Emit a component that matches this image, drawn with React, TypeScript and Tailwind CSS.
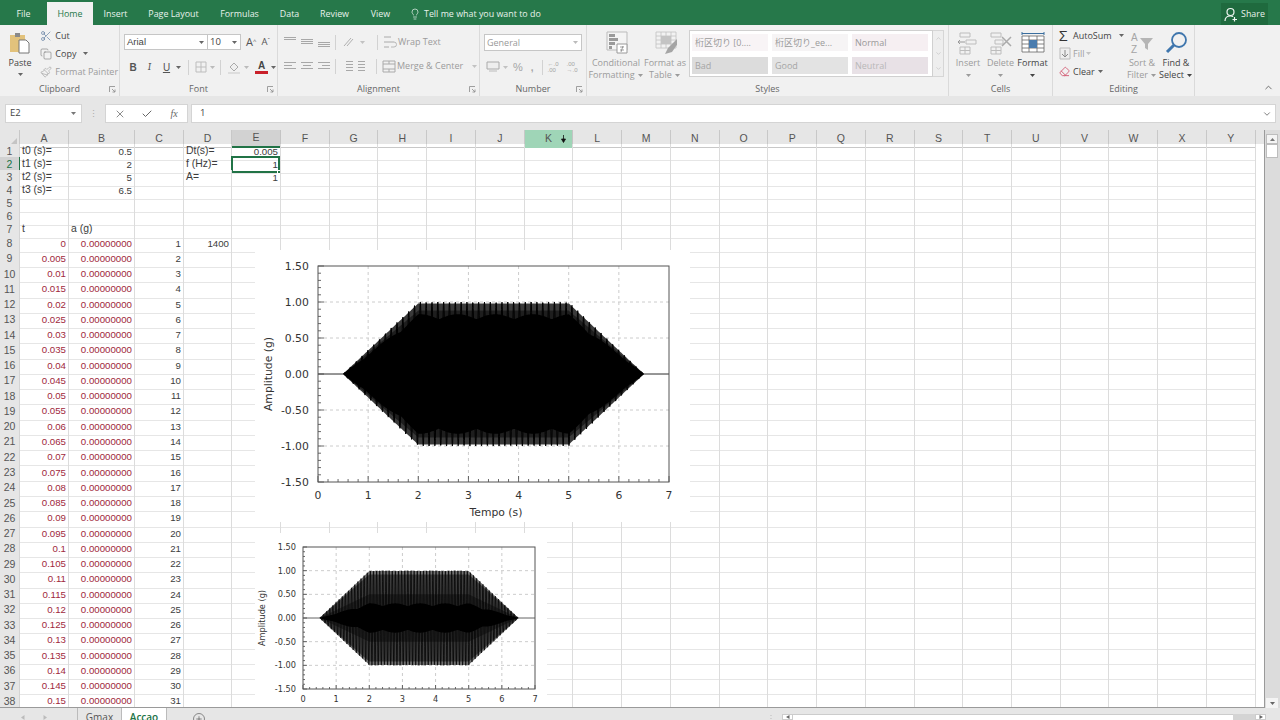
import React from "react";
import { Scissors, Copy, Paintbrush, Lightbulb, ChevronDown, ChevronUp, X, Check, Plus, Eraser } from "lucide-react";

const Caret = ({ className = "" }: { className?: string }) => (
  <svg width="7" height="5" viewBox="0 0 7 5" className={`shrink-0 ${className}`}><path d="M1 1h5L3.5 4z" fill="currentColor" /></svg>
);

const Launcher = () => (
  <svg width="7" height="7" viewBox="0 0 7 7" className="text-[#8a8a8a] shrink-0"><path d="M.5 6V.5H6M3 3l3 3M6 3.5V6H3.5" fill="none" stroke="currentColor" strokeWidth=".8" /></svg>
);

const Lines = ({ rows, w = 14, h = 12, color = "#a8a8a8" }: { rows: [number, number, number][]; w?: number; h?: number; color?: string }) => (
  <svg width={w} height={h} viewBox={`0 0 ${w} ${h}`} className="shrink-0">
    {rows.map(([y, a, b], i) => <path key={i} d={`M${a} ${y + 0.5}H${b}`} stroke={color} />)}
  </svg>
);

const Group = ({ w, label, launcher, children }: { w: string; label: string; launcher?: boolean; children: React.ReactNode }) => (
  <div className={`${w} shrink-0 h-full flex flex-col border-r border-[#dadada]`}>
    <div className="flex-1 min-h-0 flex">{children}</div>
    <div className="h-[14px] flex items-center justify-center relative text-[#666] text-[9px]">
      {label}
      {launcher && <span className="absolute right-[3px] top-[4px] flex"><Launcher /></span>}
    </div>
  </div>
);

const Sep = () => <div className="w-px h-[15px] bg-[#d2d2d2] shrink-0" />;

const Big = ({ w, icon, l1, l2, dim = true, caret = true }: { w: string; icon: React.ReactNode; l1: string; l2?: string; dim?: boolean; caret?: boolean }) => (
  <div className={`${w} shrink-0 flex flex-col items-center pt-[5px] ${dim ? "text-[#9b9b9b]" : "text-[#444]"} text-[9px] leading-[12px]`}>
    <div className="h-[26px] flex items-center justify-center">{icon}</div>
    <div className="mt-[1px] whitespace-nowrap">{l1}</div>
    <div className="whitespace-nowrap flex items-center gap-[2px] h-[12px]">{l2}{caret && <Caret />}</div>
  </div>
);

const TableIcon = ({ children }: { children?: React.ReactNode }) => (
  <svg width="24" height="24" viewBox="0 0 24 24" className="shrink-0">
    {children}
  </svg>
);

const tabs: [string, string][] = [
  ["File", "w-[47px]"], ["Home", "w-[46px]"], ["Insert", "w-[45px]"], ["Page Layout", "w-[71px]"], ["Formulas", "w-[61px]"], ["Data", "w-[39px]"], ["Review", "w-[51px]"], ["View", "w-[41px]"],
];

function TopBar() {
  return (
    <div className="h-[25px] bg-[#26784a] flex items-end text-[#e8f2ec] text-[8.9px] shrink-0">
      {tabs.map(([t, w]) => (
        <div key={t} className={`${w} h-[23px] flex items-center justify-center ${t === "Home" ? "bg-[#f1f1f1] text-[#26784a]" : ""}`}>{t}</div>
      ))}
      <div className="flex items-center h-[23px] ml-[8px] gap-[3px]">
        <Lightbulb size={12} strokeWidth={1.4} />
        <span>Tell me what you want to do</span>
      </div>
      <div className="ml-auto mr-[12px] h-[22px] w-[47px] bg-[#1f6a3e] flex items-center justify-center gap-[3px]">
        <svg width="14" height="15" viewBox="0 0 14 15" fill="none" stroke="#f0f6f2" strokeWidth="1.2"><circle cx="6.500" cy="5" r="3.500" /><path d="M1 14c0-3 2-5 5.500-5 1 0 2 .2 2.700.6M10.500 10v4.500M8.500 12.500h4.500" /></svg>
        <span>Share</span>
      </div>
    </div>
  );
}

function Clipboard() {
  return (
    <Group w="w-[120px]" label="Clipboard" launcher>
      <div className="w-[40px] flex flex-col items-center pt-[6px] text-[#444] text-[9px]">
        <svg width="24" height="24" viewBox="0 0 24 24"><path d="M2 4h15v17H2z" fill="#e2c27c" /><path d="M7 2h5v4H7z" fill="#8a8a8a" /><path d="M11 9h7l3 3v10H11z" fill="#fff" stroke="#777" /></svg>
        <div className="mt-[2px] leading-[12px]">Paste</div>
        <Caret className="mt-[3px] text-[#666]" />
      </div>
      <div className="flex flex-col text-[9px] pt-[4px] gap-[5px] whitespace-nowrap">
        <div className="flex items-center gap-[1px] h-[13px] text-[#444]"><Scissors size={12} strokeWidth={1.2} className="text-[#4b6d96]" />&nbsp;Cut</div>
        <div className="flex items-center gap-[1px] h-[13px] text-[#444]"><Copy size={12} strokeWidth={1.2} className="text-[#777]" />&nbsp;Copy<Caret className="ml-[5px] text-[#666]" /></div>
        <div className="flex items-center gap-[1px] h-[13px] text-[#9b9b9b]"><Paintbrush size={12} strokeWidth={1.2} />&nbsp;Format Painter</div>
      </div>
    </Group>
  );
}

function FontGroup() {
  return (
    <Group w="w-[158px]" label="Font" launcher>
      <div className="flex flex-col pl-[4px] pt-[9px] w-full">
        <div className="flex items-center h-[16px] text-[#444]">
          <div className="w-[84px] h-full bg-white border border-[#c6c6c6] flex items-center justify-between px-[2px] font-['Liberation_Sans',sans-serif] text-[9.5px]">Arial<Caret className="text-[#666]" /></div>
          <div className="w-[33px] h-full bg-white border border-l-0 border-[#c6c6c6] flex items-center justify-between px-[2px] text-[9.5px]">10<Caret className="text-[#666]" /></div>
          <span className="ml-[5px] text-[11px] text-[#555]">A<sup className="text-[6px]">^</sup></span>
          <span className="ml-[5px] text-[9.5px] text-[#555]">A<sup className="text-[6px]">ˇ</sup></span>
        </div>
        <div className="flex items-center h-[16px] mt-[9px] text-[#555] font-['Liberation_Sans',sans-serif] text-[10px]">
          <b className="w-[16px] text-center ml-[1px]">B</b>
          <i className="w-[17px] text-center font-serif">I</i>
          <u className="w-[17px] text-center">U</u>
          <Caret className="text-[#666]" />
          <div className="ml-[6px]"><Sep /></div>
          <svg width="12" height="12" viewBox="0 0 12 12" className="ml-[6px]"><path d="M1 1h10v10H1zM6 1v10M1 6h10" fill="none" stroke="#bdbdbd" /></svg>
          <Caret className="ml-[2px] text-[#bbb]" />
          <div className="ml-[4px]"><Sep /></div>
          <svg width="14" height="13" viewBox="0 0 14 13" className="ml-[6px]"><path d="M3 6l4-4 4 4-4 4z" fill="#efefef" stroke="#aaa" /><path d="M1 12h12" stroke="#ddd" strokeWidth="2" /></svg>
          <Caret className="ml-[2px] text-[#bbb]" />
          <div className="ml-[5px] w-[13px] flex flex-col items-center leading-[10px] font-bold text-[#444]">A<div className="w-[13px] h-[3px] bg-[#c9202a]" /></div>
          <Caret className="ml-[2px] text-[#666]" />
        </div>
      </div>
    </Group>
  );
}

function Alignment() {
  const top: [number, number, number][] = [[1, 0, 12], [3, 0, 12]];
  const mid: [number, number, number][] = [[3, 0, 12], [5, 0, 12], [7, 0, 12]];
  const bot: [number, number, number][] = [[6, 0, 12], [8, 0, 12], [10, 0, 12]];
  const l: [number, number, number][] = [[2, 0, 12], [5, 0, 8], [8, 0, 12]];
  const c: [number, number, number][] = [[2, 0, 12], [5, 2, 10], [8, 0, 12]];
  const r: [number, number, number][] = [[2, 0, 12], [5, 4, 12], [8, 0, 12]];
  return (
    <Group w="w-[202px]" label="Alignment" launcher>
      <div className="flex flex-col pl-[6px] pt-[8px]">
        <div className="flex items-center h-[18px] gap-[5px]">
          <Lines rows={top} w={12} /><Lines rows={mid} w={12} /><Lines rows={bot} w={12} />
          <Sep />
          <svg width="14" height="12" viewBox="0 0 14 12" className="ml-[1px]"><path d="M2 10L9 2M5 10l6-7" stroke="#b0b0b0" fill="none" /></svg>
          <Caret className="text-[#c2c2c2] -ml-[2px]" />
          <div className="ml-[6px]"><Sep /></div>
          <svg width="14" height="13" viewBox="0 0 14 13"><path d="M1 1h7M1 6h10M1 11h5" stroke="#aaa" fill="none" /><path d="M11 6a2 2 0 010 5H8" stroke="#b8b8b8" fill="none" /></svg>
          <span className="text-[#9b9b9b] text-[9px] -ml-[4px]">Wrap Text</span>
        </div>
        <div className="flex items-center h-[18px] gap-[5px] mt-[6px]">
          <Lines rows={l} w={12} /><Lines rows={c} w={12} /><Lines rows={r} w={12} />
          <Sep />
          <Lines rows={[[1, 5, 12], [4, 5, 12], [7, 5, 12], [10, 5, 12]]} w={12} />
          <Lines rows={[[1, 0, 7], [4, 0, 7], [7, 0, 7], [10, 0, 7]]} w={12} />
          <div className="ml-[1px]"><Sep /></div>
          <svg width="14" height="13" viewBox="0 0 14 13"><path d="M1 1h12v11H1zM1 4h12M1 9h12M7 1v3M7 9v3" stroke="#aaa" fill="none" /></svg>
          <span className="text-[#9b9b9b] text-[9px] -ml-[4px] whitespace-nowrap">Merge &amp; Center</span>
          <Caret className="text-[#c2c2c2] ml-[3px]" />
        </div>
      </div>
    </Group>
  );
}

function NumberGroup() {
  return (
    <Group w="w-[107px]" label="Number" launcher>
      <div className="flex flex-col pl-[4px] pt-[9px]">
        <div className="w-[98px] h-[17px] bg-white border border-[#c6c6c6] flex items-center justify-between px-[2px] text-[#999] text-[9px]">General<Caret className="text-[#bbb]" /></div>
        <div className="flex items-center h-[16px] mt-[8px] text-[#a5a5a5] font-['Liberation_Sans',sans-serif]">
          <svg width="14" height="12" viewBox="0 0 14 12" className="ml-[2px]"><path d="M1 1h12v7H1z" fill="#eee" stroke="#aaa" /><path d="M3 10h8" stroke="#bbb" /></svg>
          <Caret className="ml-[2px] text-[#c2c2c2]" />
          <span className="ml-[4px] text-[11px]">%</span>
          <b className="ml-[8px] text-[10px] font-bold">,</b>
          <div className="ml-[8px]"><Sep /></div>
          <span className="ml-[5px] text-[6px] leading-[6px] w-[12px]">←.0<br />.00</span>
          <span className="ml-[7px] text-[6px] leading-[6px] w-[12px]">.00<br />→.0</span>
        </div>
      </div>
    </Group>
  );
}

const StyleCell = ({ t, className }: { t: string; className: string }) => (
  <div className={`w-[76px] h-[17px] flex items-center px-[3px] text-[9px] whitespace-nowrap overflow-hidden ${className}`}>{t}</div>
);

function Styles() {
  return (
    <Group w="w-[362px]" label="Styles">
      <Big w="w-[50px] ml-[4px]" l1="Conditional" l2="Formatting"
        icon={<TableIcon><path d="M3 1h20v18H3z" fill="#f4f4f4" stroke="#bbb" /><path d="M5 3h6v3H5zM5 7h9v3H5zM5 11h6v3H5zM5 15h3v3H5z" fill="#9a9a9a" /><path d="M13 13h10v9H13z" fill="#fff" stroke="#999" /><path d="M16 16h4M16 19h4M19 15l-2 6" stroke="#888" fill="none" strokeWidth=".8" /></TableIcon>} />
      <Big w="w-[48px]" l1="Format as" l2="Table"
        icon={<TableIcon><path d="M3 1h20v16H3zM3 5h20M3 9h20M3 13h20M8 1v16M13 1v16M18 1v16" fill="#f2f2f2" stroke="#c2c2c2" strokeWidth=".8" /><path d="M8 5h10v8H8z" fill="#c4c4c4" /><path d="M24 8l-9 9-3 6 7-2 7-10z" fill="#a5a5a5" /></TableIcon>} />
      <div className="flex items-start mt-[5px]">
        <div className="w-[244px] h-[47px] bg-white border border-[#d0d0d0] grid grid-cols-[76px_76px_76px] gap-x-[4px] gap-y-[4px] pl-[2px] pt-[3px] font-['Open_Sans','Noto_Sans_CJK_JP',sans-serif]">
          <StyleCell t="桁区切り [0...." className="bg-[#f8f4f6] text-[#9a9a9a]" />
          <StyleCell t="桁区切り_ee..." className="bg-[#f6f4f5] text-[#9a9a9a]" />
          <StyleCell t="Normal" className="bg-[#f6eff2] text-[#999]" />
          <StyleCell t="Bad" className="bg-[#dcdcdc] text-[#a5a5a5]" />
          <StyleCell t="Good" className="bg-[#e3e3e3] text-[#a5a5a5]" />
          <StyleCell t="Neutral" className="bg-[#e8e1e6] text-[#b8b8b8]" />
        </div>
        <div className="w-[11px] h-[47px] border border-l-0 border-[#d6d6d6] bg-[#eeeeee] flex flex-col items-center justify-around text-[#bbb]">
          <ChevronUp size={7} /><ChevronDown size={7} /><ChevronDown size={7} />
        </div>
      </div>
    </Group>
  );
}

function Cells() {
  return (
    <Group w="w-[104px]" label="Cells">
      <Big w="w-[32px] ml-[3px]" l1="Insert" l2=""
        icon={<TableIcon><path d="M4 2h10v4H4zM4 16h10v7H4zM4 19.500h10M9 16v7M10 9h10v4H10z" fill="none" stroke="#bdbdbd" /><path d="M9 11H2M4 9l-2 2 2 2" fill="none" stroke="#999" /></TableIcon>} />
      <Big w="w-[33px]" l1="Delete" l2=""
        icon={<TableIcon><path d="M2 2h10v4H2zM2 16h10v7H2zM2 19.500h10M7 16v7M6 9h8v4H6z" fill="none" stroke="#bdbdbd" /><path d="M13 6l9 9M22 6l-9 9" stroke="#aaa" strokeWidth="1.500" /></TableIcon>} />
      <Big w="w-[31px]" dim={false} l1="Format" l2=""
        icon={<TableIcon><path d="M1 5h22v16H1zM1 9h22M1 13h22M1 17h22M8 5v16M16 5v16" fill="#fff" stroke="#666" strokeWidth=".8" /><path d="M8 9h8v8H8z" fill="#4a7cae" /><path d="M1 2.500h22M1 1v3M23 1v3" stroke="#3a6e9e" fill="none" /></TableIcon>} />
    </Group>
  );
}

function Editing() {
  return (
    <Group w="w-[142px]" label="Editing">
      <div className="w-[72px] shrink-0 flex flex-col pt-[4px] pl-[6px] gap-[5px] text-[9px]">
        <div className="flex items-center h-[13px] text-[#444]"><span className="w-[14px] shrink-0 text-[15px] leading-none text-[#333]">Σ</span>AutoSum<Caret className="ml-[6px] text-[#666]" /></div>
        <div className="flex items-center h-[13px] text-[#a0a0a0]"><span className="w-[14px] shrink-0 flex"><svg width="12" height="13" viewBox="0 0 12 13"><path d="M1 1h10v11H1z" fill="#eee" stroke="#bbb" /><path d="M6 3v7M3 7l3 3 3-3" fill="none" stroke="#8a8a8a" /></svg></span>Fill<Caret className="ml-[1px] text-[#c2c2c2]" /></div>
        <div className="flex items-center h-[13px] text-[#444]"><span className="w-[14px] shrink-0 flex"><Eraser size={11} className="text-[#d25a72]" strokeWidth={2} /></span>Clear<Caret className="ml-[2px] text-[#666]" /></div>
      </div>
      <Big w="w-[34px]" l1="Sort &" l2="Filter"
        icon={<TableIcon><text x="1" y="10" fontSize="10" fill="#a5a5a5" fontFamily="Liberation Sans">A</text><text x="1" y="22" fontSize="10" fill="#a5a5a5" fontFamily="Liberation Sans">Z</text><path d="M10 7h13l-5 6v6l-3-2v-4z" fill="#b5b5b5" /></TableIcon>} />
      <Big w="w-[34px]" dim={false} l1="Find &" l2="Select"
        icon={<TableIcon><circle cx="15" cy="9" r="7" fill="none" stroke="#3f76ad" strokeWidth="1.800" /><path d="M10 14l-7 7" stroke="#3f76ad" strokeWidth="3" /></TableIcon>} />
    </Group>
  );
}

function Ribbon() {
  return (
    <div className="h-[71px] bg-[#f1f1f1] flex shrink-0 pr-[6px]">
      <Clipboard /><FontGroup /><Alignment /><NumberGroup /><Styles /><Cells /><Editing />
      <div className="flex-1 flex items-end justify-end pb-[3px] text-[#666]"><ChevronUp size={11} /></div>
    </div>
  );
}

function FormulaBar() {
  return (
    <div className="h-[34px] bg-[#e6e6e6] flex items-start pt-[8px] pl-[5px] shrink-0 text-[#444] font-['Open_Sans',sans-serif] text-[9.5px]">
      <div className="w-[77px] h-[19px] bg-white border border-[#d4d4d4] flex items-center justify-between px-[4px]">E2<Caret className="text-[#777]" /></div>
      <div className="w-[23px] h-[19px] flex items-center justify-center text-[#aaa] text-[9px]">⋮</div>
      <div className="w-[83px] h-[19px] bg-white border border-[#d4d4d4] flex items-center text-[#666]">
        <div className="w-[28px] flex justify-center"><X size={12} strokeWidth={1.5} /></div>
        <div className="w-[28px] flex justify-center"><Check size={12} strokeWidth={2} /></div>
        <div className="w-[26px] flex justify-center font-['Liberation_Serif',serif] italic text-[10px]">fx</div>
      </div>
      <div className="ml-[3px] w-[1085px] h-[19px] bg-white border border-[#d4d4d4] flex items-center justify-between pl-[8px] pr-[3px]">1<ChevronDown size={10} className="text-[#666]" /></div>
    </div>
  );
}

const gridCols = "grid grid-cols-[20px_49px_66px_49px_48px_49px_repeat(20,48.74px)]";
const colNames = "ABCDEFGHIJKLMNOPQRSTUVWXY".split("");

type Cell = { t: string; right?: boolean; red?: boolean };
const top: Record<number, Cell[]> = {
  1: [{ t: "t0 (s)=" }, { t: "0.5", right: true }, { t: "" }, { t: "Dt(s)=" }, { t: "0.005", right: true }],
  2: [{ t: "t1 (s)=" }, { t: "2", right: true }, { t: "" }, { t: "f (Hz)=" }, { t: "1", right: true }],
  3: [{ t: "t2 (s)=" }, { t: "5", right: true }, { t: "" }, { t: "A=" }, { t: "1", right: true }],
  4: [{ t: "t3 (s)=" }, { t: "6.5", right: true }],
  7: [{ t: "t" }, { t: "a (g)" }],
  8: [{ t: "0", right: true, red: true }, { t: "0.00000000", right: true, red: true }, { t: "1", right: true }, { t: "1400", right: true }],
};

function rowCells(r: number): Cell[] {
  if (top[r]) return top[r];
  if (r >= 9) {
    const v = (r - 8) * 0.005;
    return [{ t: String(Number(v.toFixed(3))), right: true, red: true }, { t: "0.00000000", right: true, red: true }, { t: String(r - 7), right: true }];
  }
  return [];
}

function Row({ r }: { r: number }) {
  const cells = rowCells(r);
  const h = r <= 6 ? "h-[13px]" : r === 7 ? "h-[14px]" : "h-[15.27px]";
  return (
    <div className={`${gridCols} ${h}`}>
      <div className={`flex items-center justify-center border-b border-r text-[10.5px] ${r === 2 ? "bg-[#d2d2d2] border-b-[#c4c4c4] border-r-[#217346] text-[#217346]" : "bg-[#e6e6e6] border-[#d4d4d4] text-[#555]"}`}>{r}</div>
      {colNames.map((c, i) => {
        const cell = cells[i];
        return (
          <div key={c} className={`relative border-b border-r border-b-[#e6e6e6] border-r-[#dcdcdc] flex items-center px-[2px] pb-[1px] leading-none whitespace-nowrap ${cell?.right ? "justify-end" : "text-[10.4px]"} ${cell?.red ? "text-[#a0283c]" : "text-[#3c3c3c]"}`}>
            {cell?.t}
            {r === 2 && c === "E" && (
              <div className="absolute -left-px -top-px right-0 bottom-0 border-2 border-[#217346]">
                <div className="absolute -right-[3px] -bottom-[3px] w-[4px] h-[4px] bg-[#217346] border border-white" />
              </div>
            )}
          </div>
        );
      })}
    </div>
  );
}

function Headers() {
  return (
    <div className={`${gridCols} h-[14px] bg-[#e6e6e6] text-[#555] text-[10.5px]`}>
      <div className="border-r border-b border-[#c8c8c8] flex items-end justify-end p-[2px]"><div className="w-0 h-0 border-l-[7px] border-l-transparent border-b-[7px] border-b-[#c4c4c4]" /></div>
      {colNames.map((c) => (
        <div key={c} className={`relative flex items-center justify-center border-r ${c === "E" ? "bg-[#d2d2d2] border-b-2 border-b-[#217346] border-r-[#c4c4c4]" : c === "K" ? "bg-[#9fd5b7] border-b border-b-[#9fd5b7] border-r-[#c4c4c4]" : "border-b border-[#c8c8c8]"}`}>
          {c}
          {c === "K" && (
            <svg width="5" height="8" viewBox="0 0 5 8" className="absolute left-[36px] top-[5px]"><path d="M2.500 0v6M.5 4l2 3.500 2-3.500z" stroke="#111" fill="#111" strokeWidth=".8" /></svg>
          )}
        </div>
      ))}
    </div>
  );
}

const envelope = (t: number) => (t < 0.5 ? 0 : t < 2 ? (t - 0.5) / 1.5 : t <= 5 ? 1 : t < 6.5 ? (6.5 - t) / 1.5 : 0);

function Chart({ className, w, h, px, py, pw, ph, fs, tick, sw, freq, inner, lobe, bands, xTitle, yx }: {
  className: string; w: number; h: number; px: number; py: number; pw: number; ph: number; fs: number; tick: number; sw: number; freq: number; inner: number; lobe: number; bands: [number, string][]; xTitle: boolean; yx: number;
}) {
  const X = (t: number) => px + (t / 7) * pw;
  const Y = (v: number) => py + ((1.5 - v) / 3) * ph;
  let d = "";
  for (let i = 0; i <= 1400; i++) {
    const t = i * 0.005;
    const v = envelope(t) * Math.sin(2 * Math.PI * freq * (t - 0.5));
    d += `${i ? "L" : "M"}${X(t).toFixed(2)} ${Y(v).toFixed(2)}`;
  }
  const band = (a: number, lobes: number) => {
    const up: string[] = [];
    const dn: string[] = [];
    for (let i = 0; i <= 280; i++) {
      const t = i * 0.025;
      const e = envelope(t) * (a + lobes * Math.abs(Math.sin(Math.PI * (t - 0.15) * 1.33)));
      up.push(`${X(t).toFixed(1)} ${Y(e).toFixed(1)}`);
      dn.unshift(`${X(t).toFixed(1)} ${Y(-e).toFixed(1)}`);
    }
    return `M${up.join("L")}L${dn.join("L")}Z`;
  };
  const yT: number[] = [];
  for (let i = -15; i <= 15; i++) yT.push(i / 10);
  const xT: number[] = [];
  for (let i = 0; i <= 35; i++) xT.push(i / 5);
  const labY = [1.5, 1, 0.5, 0, -0.5, -1, -1.5];
  const font = "DejaVu Sans, sans-serif";
  return (
    <div className={`absolute bg-white overflow-hidden ${className}`}>
      <svg width={w} height={h} viewBox={`0 0 ${w} ${h}`} className="block">
        {[1, 2, 3, 4, 5, 6].map((t) => <path key={t} d={`M${X(t)} ${py}V${py + ph}`} stroke="#cccccc" strokeDasharray="3 3" />)}
        {[1, 0.5, -0.5, -1].map((v) => <path key={v} d={`M${px} ${Y(v)}H${px + pw}`} stroke="#cccccc" strokeDasharray="3 3" />)}
        {bands.map(([a, f]) => <path key={a} d={band(a, 0)} fill={f} />)}
        <path d={band(inner, lobe)} fill="#000" />
        <path d={d} fill="none" stroke="#000" strokeWidth={sw} strokeLinejoin="round" />
        {yT.map((v, i) => <path key={i} d={`M${px} ${Y(v)}h${i % 5 === 0 ? tick : tick / 2}`} stroke="#444" strokeWidth=".8" />)}
        {xT.map((t, i) => <path key={i} d={`M${X(t)} ${py + ph}v${i % 5 === 0 ? -tick : -tick / 2}`} stroke="#444" strokeWidth=".8" />)}
        <rect x={px} y={py} width={pw} height={ph} fill="none" stroke="#555" />
        {labY.map((v) => (
          <text key={v} x={px - fs * 0.85} y={Y(v) + fs * 0.36} textAnchor="end" fontSize={fs} fill="#333" fontFamily={font}>{v.toFixed(2)}</text>
        ))}
        {[0, 1, 2, 3, 4, 5, 6, 7].map((t) => (
          <text key={t} x={X(t)} y={py + ph + fs * 1.55} textAnchor="middle" fontSize={fs} fill="#333" fontFamily={font}>{t}</text>
        ))}
        {xTitle && <text x={X(3.55)} y={py + ph + 34} textAnchor="middle" fontSize={fs} fill="#333" fontFamily={font}>Tempo (s)</text>}
        <text transform={`translate(${yx} ${py + ph / 2}) rotate(-90)`} textAnchor="middle" fontSize={fs} fill="#333" fontFamily={font}>Amplitude (g)</text>
      </svg>
    </div>
  );
}

function Sheet() {
  const rows = Array.from({ length: 38 }, (_, i) => i + 1);
  return (
    <div className="h-[578px] flex shrink-0">
      <div className="relative w-[1265px] overflow-hidden bg-white font-['Liberation_Sans',sans-serif] text-[9.7px] border-r border-b border-[#9a9a9a]">
        <Headers />
        {rows.map((r) => <Row key={r} r={r} />)}
        <Chart className="left-[255px] top-[120px] w-[435px] h-[272px]" w={435} h={272} px={63} py={16} pw={351} ph={216} fs={10.8} tick={6} sw={1} freq={8.6} inner={0.76} lobe={0.07} bands={[[0.98, "#3a3a3a"], [0.88, "#1e1e1e"]]} xTitle yx={17} />
        <Chart className="left-[255px] top-[403px] w-[292px] h-[175px]" w={292} h={175} px={48} py={14} pw={232} ph={142} fs={8.2} tick={4} sw={0.7} freq={10.6} inner={0.25} lobe={0.06} bands={[[0.99, "#707070"], [0.92, "#3c3c3c"], [0.5, "#262626"]]} xTitle={false} yx={10} />
      </div>
      <div className="flex-1 bg-[#dcdcdc] flex flex-col pl-[1px] pr-[2px]">
        <div className="h-[10px] bg-[#f4f4f4] border border-[#bdbdbd] flex items-center justify-center mt-[4px] text-[#777]"><svg width="7" height="5" viewBox="0 0 7 5"><path d="M1 4h5L3.500 1z" fill="currentColor" /></svg></div>
        <div className="h-[14px] bg-white border border-[#bdbdbd]" />
        <div className="flex-1" />
        <div className="h-[10px] bg-[#f4f4f4] flex items-center justify-center text-[#666]"><Caret /></div>
      </div>
    </div>
  );
}

function SheetTabs() {
  return (
    <div className="h-[12px] bg-[#e6e6e6] flex items-stretch shrink-0 text-[10px] text-[#555] overflow-hidden font-['Open_Sans',sans-serif]">
      <div className="w-[78px] border-r border-[#bbb] flex items-start pt-[7px] pl-[21px] gap-[18px] text-[#bbb]">
        <svg width="4" height="5" viewBox="0 0 4 5" className="shrink-0"><path d="M3.500 0v5L0 2.500z" fill="currentColor" /></svg>
        <svg width="4" height="5" viewBox="0 0 4 5" className="shrink-0"><path d="M.5 0v5L4 2.500z" fill="currentColor" /></svg>
      </div>
      <div className="w-[44px] flex items-start justify-center pt-[2px] border-r border-[#bbb] leading-[14px]">Gmax</div>
      <div className="w-[45px] bg-white flex items-start justify-center pt-[2px] text-[#217346] font-semibold border-r border-[#bbb] leading-[14px]">Accao</div>
      <div className="ml-[26px] mt-[5px] w-[12px] h-[12px] rounded-full border border-[#888] flex items-center justify-center shrink-0"><Plus size={8} /></div>
      <div className="ml-auto mr-[14px] flex items-start pt-[6px]">
        <svg width="11" height="6" viewBox="0 0 11 6" className="mr-[3px] text-[#bbb]"><path d="M3 1v1M3 4v1" stroke="currentColor" /></svg>
        <div className="w-[11px] h-[6px] bg-white border border-[#ccc] flex items-center justify-center text-[#666]"><svg width="4" height="4" viewBox="0 0 4 4"><path d="M3.500 0v4L0 2z" fill="currentColor" /></svg></div>
        <div className="w-[440px] h-[6px] bg-white border-t border-[#ccc]" />
        <div className="w-[22px] h-[6px] bg-[#d4d4d4]" />
        <div className="w-[11px] h-[6px] bg-white border border-[#ccc] flex items-center justify-center text-[#666]"><svg width="4" height="4" viewBox="0 0 4 4"><path d="M.5 0v4L4 2z" fill="currentColor" /></svg></div>
      </div>
    </div>
  );
}

export default function App() {
  return (
    <div className="w-[1280px] h-[720px] overflow-hidden flex flex-col bg-[#e6e6e6] font-['Open_Sans',sans-serif]">
      <TopBar />
      <Ribbon />
      <FormulaBar />
      <Sheet />
      <SheetTabs />
    </div>
  );
}
